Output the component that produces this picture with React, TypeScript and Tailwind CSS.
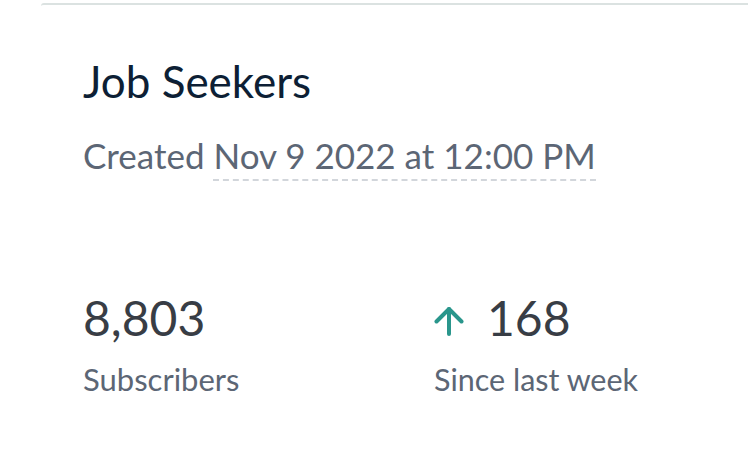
import React from 'react';

export default function App() {
  return (
    <div className="min-h-screen bg-white pt-[3px] pl-[41px]" style={{ fontFamily: 'Lato, "Open Sans", sans-serif' }}>
      <div className="border-t-2 border-[#dbe2e1] rounded-tl-[3px] pl-[42px] pt-[54px]">
        <h1 className="text-[44px] leading-none text-[#0d1f35]">Job Seekers</h1>
        <p className="mt-[35px] text-[35px] leading-none text-[#5c6675]">
          Created{' '}
          <span className="border-b-2 border-dashed border-[#d2d6db] pb-[3px]">Nov 9 2022 at 12:00 PM</span>
        </p>

        <div className="mt-[121px] flex">
          <div className="w-[351px]">
            <div className="text-[48px] leading-none text-[#383d45]">8,803</div>
            <div className="mt-[22px] text-[31px] leading-none text-[#5c6675]">Subscribers</div>
          </div>
          <div>
            <div className="flex items-center gap-[23px]">
              <svg className="mt-[5px]" width="30" height="30" viewBox="0 0 30 30" fill="none" stroke="#2a968c" strokeWidth="4" strokeLinecap="round" strokeLinejoin="round">
                <path d="M15 28V3" />
                <path d="M2.5 15.5L15 3l12.5 12.5" />
              </svg>
              <span className="text-[48px] leading-none text-[#383d45]">168</span>
            </div>
            <div className="mt-[22px] text-[30.5px] leading-none text-[#5c6675]">Since last week</div>
          </div>
        </div>
      </div>
    </div>
  );
}
